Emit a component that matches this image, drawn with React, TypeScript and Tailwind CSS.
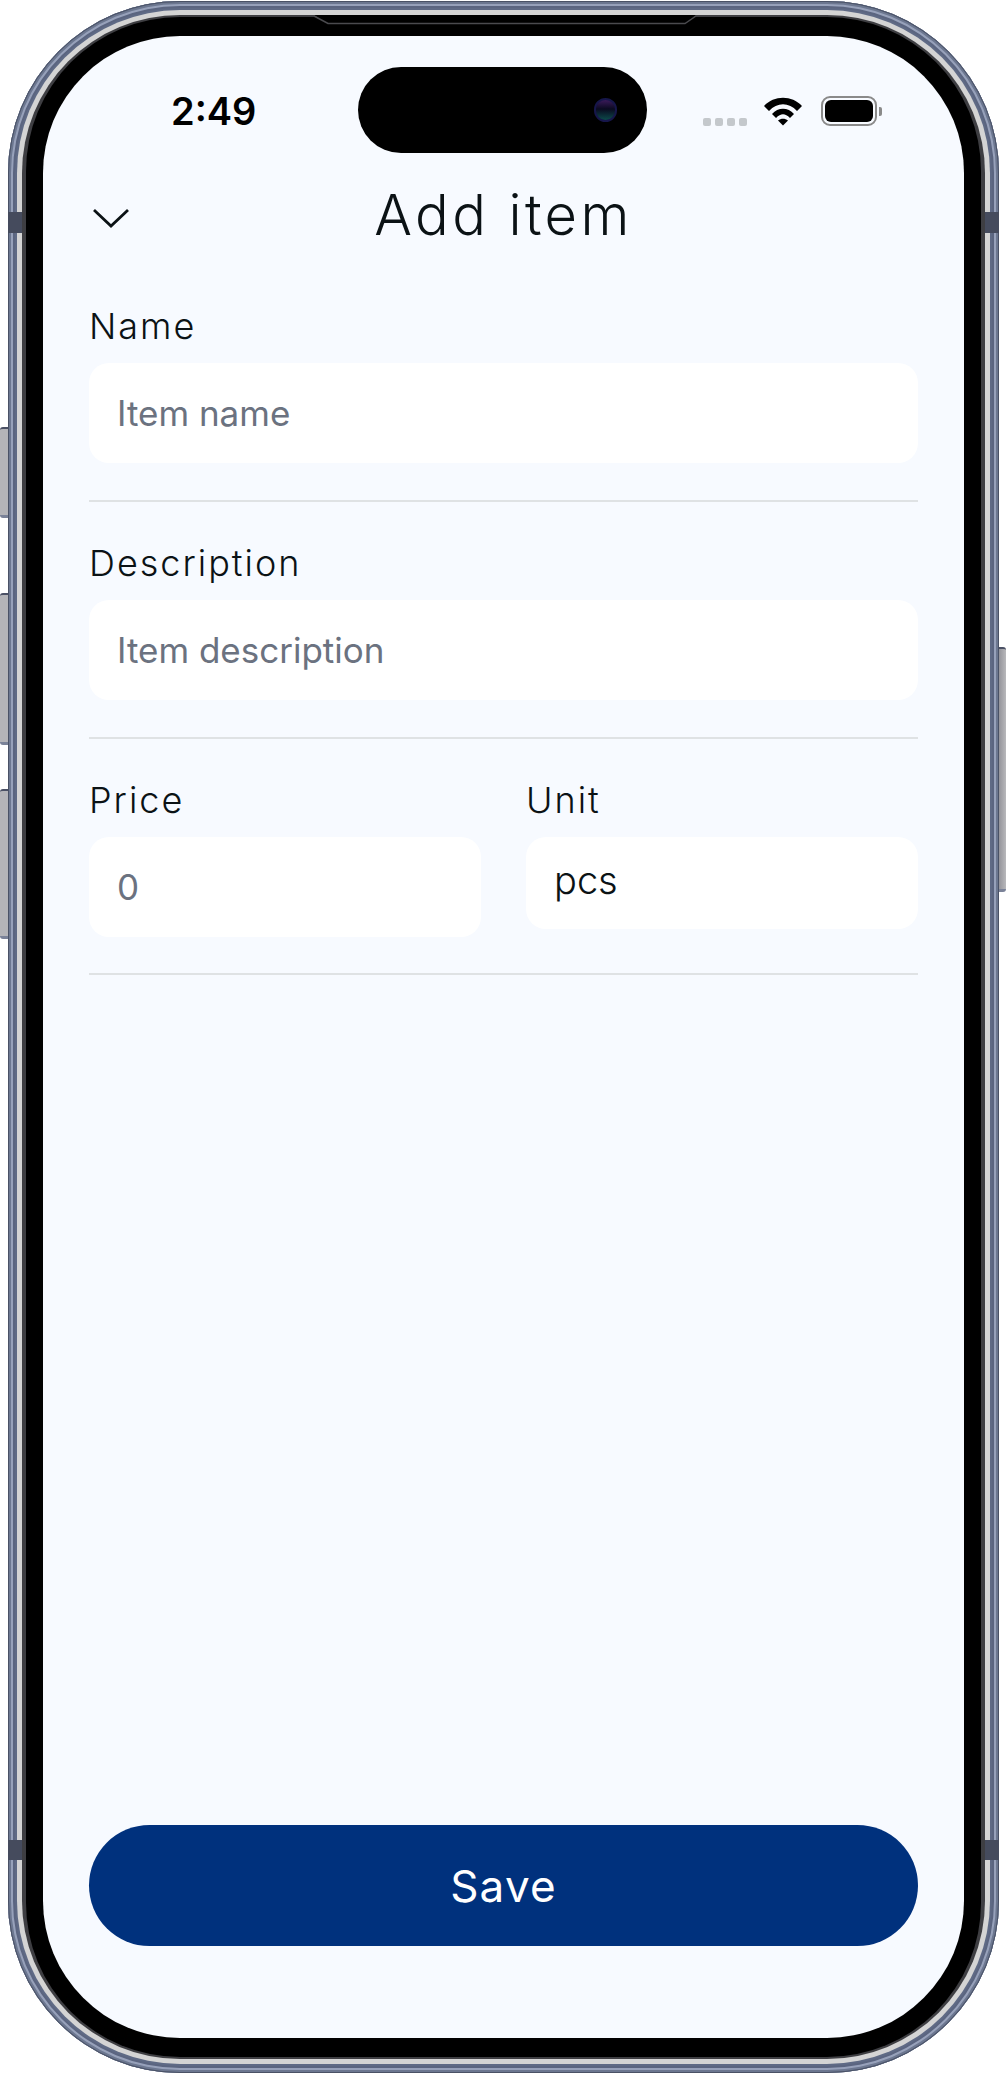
import React from "react";

const mont = "font-['Inter','Liberation_Sans',sans-serif]";

function Label({ children }: { children: React.ReactNode }) {
  return <div className={`${mont} text-[36px] leading-[42px] font-light tracking-[2px] text-[#0b1215]`}>{children}</div>;
}

function Field({ label, placeholder, value, h = "h-[100px]" }: { label: string; placeholder?: string; value?: string; h?: string }) {
  return (
    <div className="flex flex-col gap-[16px] flex-1 min-w-0">
      <Label>{label}</Label>
      {value ? (
        <div className={`${h} bg-white rounded-[20px] pl-[28px] pt-[22px] font-['Inter',sans-serif] font-light text-[38px] leading-[42px] text-[#0b1215]`}>{value}</div>
      ) : (
        <div className={`${h} bg-white rounded-[20px] pl-[28px] flex items-center font-['Inter',sans-serif] text-[35px] leading-[42px] text-[#6b7280]`}>{placeholder}</div>
      )}
    </div>
  );
}

function SideButton({ top, height }: { top: string; height: string }) {
  return <div className={`absolute left-0 w-[8px] ${top} ${height} bg-[#b4b4b8] rounded-l-[3px] border-t-2 border-b-[3px] border-t-[#4a5064] border-b-[#7a8298]`} />;
}

function Divider() {
  return <div className="h-[2px] bg-[#dfe2e4] mt-[37px] mb-[40px]" />;
}

export default function App() {
  return (
    <div className="relative w-[1007px] h-[2074px] bg-white overflow-hidden">
      <SideButton top="top-[427px]" height="h-[91px]" />
      <SideButton top="top-[593px]" height="h-[152px]" />
      <SideButton top="top-[789px]" height="h-[150px]" />
      <div className="absolute left-[998px] top-[647px] w-[8px] h-[245px] rounded-r-[3px] border-t-2 border-b-[3px] border-t-[#4a5064] border-b-[#7a8298] bg-[linear-gradient(90deg,#8f8f96,#b9b9bc)]" />

      <div className="absolute left-[8px] top-[1px] w-[991px] h-[2072px] rounded-[172px] p-[9px] bg-[#5f6a85] shadow-[inset_0_0_0_1px_#4a5266,inset_0_0_0_3px_#6c7790,inset_0_0_0_5px_#97a1ba,inset_0_0_0_7px_#5b6580]">
        <div className="w-full h-full rounded-[163px] p-[5px] bg-[#d4d4d4]">
          <div className="w-full h-full rounded-[158px] px-[4px] py-[2px] bg-[#3e3e42]">
            <div className="relative w-full h-full rounded-[154px] px-[17px] py-[19px] bg-black">
              <div className="relative flex flex-col w-full h-full rounded-[137px] bg-[#f7faff] overflow-hidden">
                {/* status bar */}
                <div className="relative h-[117px] shrink-0">
                  <div className="absolute left-[128px] top-[52px] font-['Inter',sans-serif] text-[38px] leading-[46px] font-semibold text-black">2:49</div>
                  <div className="absolute left-[315px] top-[31px] w-[289px] h-[86px] rounded-[43px] bg-black">
                    <div className="absolute left-[236px] top-[31px] w-[23px] h-[24px] rounded-full border-2 border-[#16164a] bg-[linear-gradient(180deg,#3a1a5a,#0a0a20_45%,#0c4a4a)]" />
                  </div>
                  <div className="absolute left-[660px] top-[82px] flex gap-[4px]">
                    {[0, 1, 2, 3].map((i) => (
                      <div key={i} className="w-[8px] h-[8px] rounded-[2px] bg-[#c4c8cc]" />
                    ))}
                  </div>
                  <svg className="absolute left-[720px] top-[60px]" width="40" height="30" viewBox="0 0 40 30">
                    <path d="M1 10 C11 -1 29 -1 39 10 L34 15 C26 6 14 6 6 15 Z" fill="#000" />
                    <path d="M9 18 C15 11 25 11 31 18 L27 22 C22 17 18 17 13 22 Z" fill="#000" />
                    <path d="M15 24.5 C18 22 22 22 25 24.5 L20 29.5 Z" fill="#000" />
                  </svg>
                  <div className="absolute left-[778px] top-[60px] w-[56px] h-[30px] rounded-[9px] border-[2px] border-[#8a8a8a] p-[2px]">
                    <div className="w-full h-full rounded-[6px] bg-black" />
                  </div>
                  <div className="absolute left-[836px] top-[71px] w-[3px] h-[9px] rounded-r-[2px] bg-[#8a8a8a]" />
                </div>

                {/* content */}
                <div className="flex flex-col flex-1 px-[46px]">
                  <div className="relative flex items-center justify-center h-[60px] mt-[32px]">
                    <svg className="absolute left-[3px] top-[23px]" width="38" height="22" viewBox="0 0 38 22" fill="none">
                      <path d="M2 2 L19 18 L36 2" stroke="#0b1215" strokeWidth="2.8" />
                    </svg>
                    <div className={`${mont} text-[56px] leading-[60px] font-light tracking-[3.4px] text-[#0b1215]`}>Add item</div>
                  </div>
                  <div className="mt-[60px] flex flex-col">
                    <Field label="Name" placeholder="Item name" />
                    <Divider />
                    <Field label="Description" placeholder="Item description" />
                    <Divider />
                    <div className="flex gap-[45px] items-start h-[158px]">
                      <Field label="Price" placeholder="0" />
                      <Field label="Unit" value="pcs" h="h-[92px]" />
                    </div>
                    <div className="h-[2px] bg-[#dfe2e4] mt-[36px]" />
                  </div>
                  <div className="mt-auto mb-[92px] h-[121px] rounded-[61px] bg-[#00317d] flex items-center justify-center">
                    <span className={`${mont} text-[44px] font-normal tracking-[1.2px] text-white`}>Save</span>
                  </div>
                </div>
              </div>
            </div>
          </div>
        </div>
      </div>

      {/* antenna bands */}
      <div className="absolute left-[8px] top-[212px] w-[14px] h-[21px] bg-[#454b5d]" />
      <div className="absolute left-[985px] top-[212px] w-[14px] h-[21px] bg-[#454b5d]" />
      <div className="absolute left-[8px] top-[1840px] w-[14px] h-[20px] bg-[#454b5d]" />
      <div className="absolute left-[985px] top-[1840px] w-[14px] h-[20px] bg-[#454b5d]" />
      {/* speaker notch line */}
      <svg className="absolute left-[310px] top-[14px]" width="390" height="12" viewBox="0 0 390 12">
        <path d="M4 1 L18 9.5 L375 9.5 L386 1 Z" fill="#000" />
        <path d="M4 2 L18 9.5 L375 9.5 L386 2" fill="none" stroke="#4a4a4e" strokeWidth="1.5" />
      </svg>
    </div>
  );
}
